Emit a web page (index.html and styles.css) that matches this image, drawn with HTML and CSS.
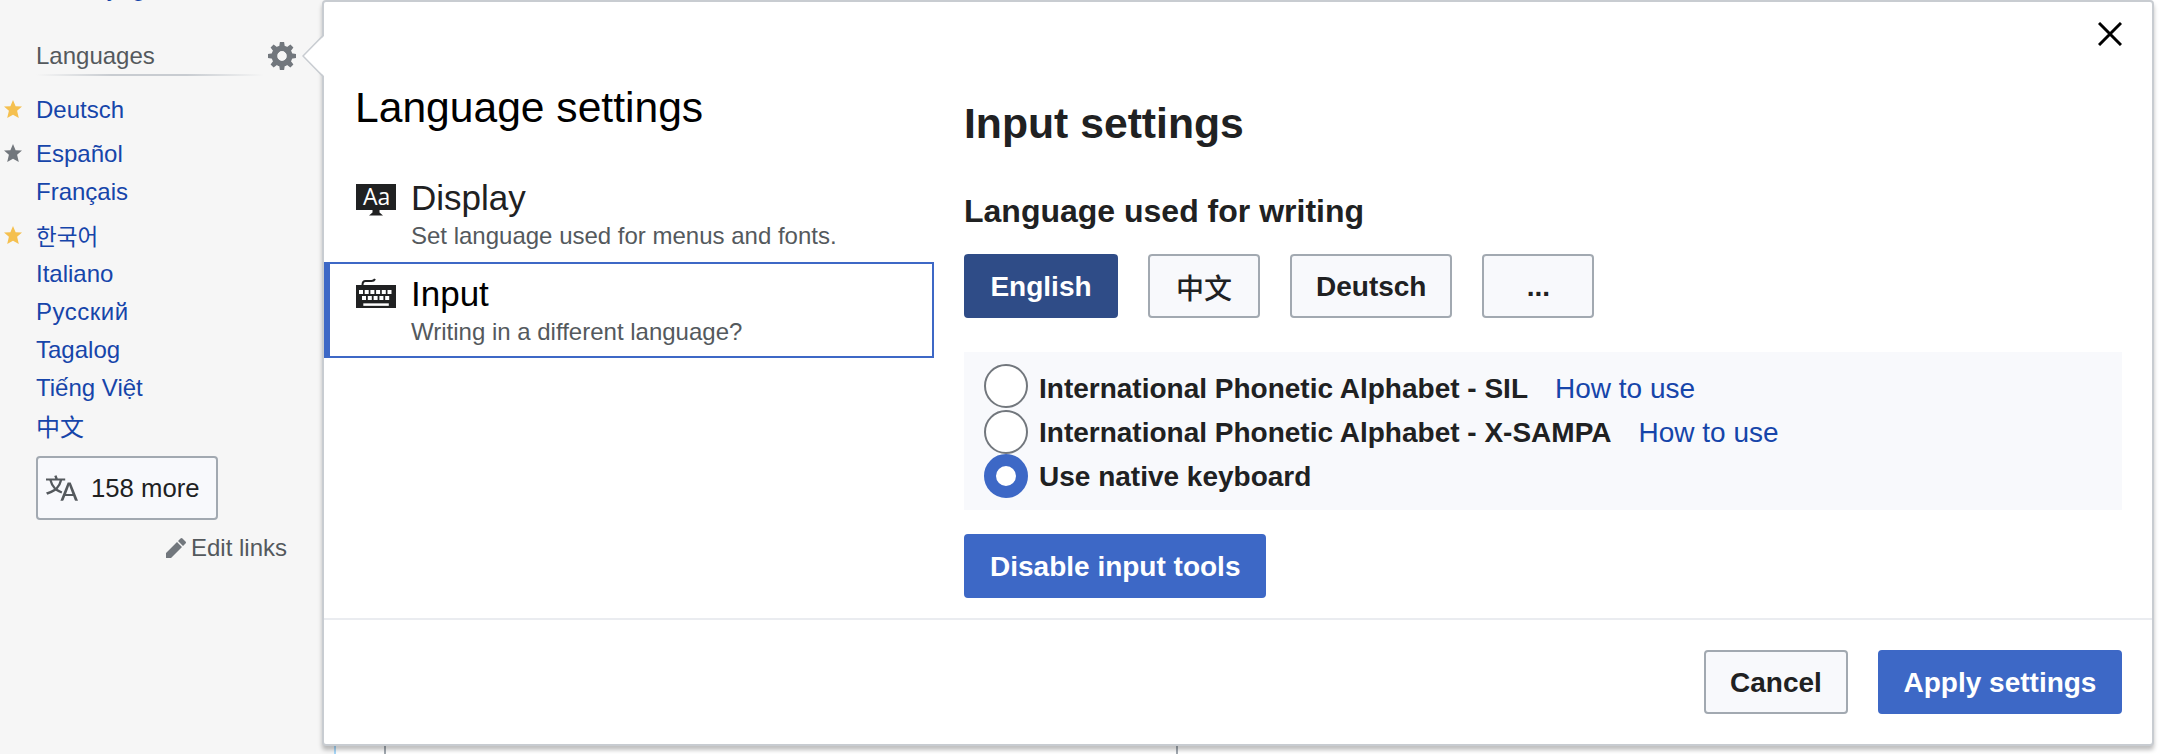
FILE: index.html
```html
<!DOCTYPE html>
<html lang="en">
<head>
<meta charset="utf-8">
<title>Language settings</title>
<link rel="stylesheet" href="styles.css">
</head>
<body>
<div class="page">
  <nav class="sidebar">
    <a class="link tool-link">Wikivoyage</a>
    <div class="heading">
      <h3 class="heading-text">Languages</h3>
      <svg class="gear" viewBox="0 0 20 20"><g transform="translate(10 10)"><path id="a" d="M1.5-10h-3l-1 6.500h5m0 7h-5l1 6.500h3"/><use href="#a" transform="rotate(45)"/><use href="#a" transform="rotate(90)"/><use href="#a" transform="rotate(135)"/></g><path d="M10 2.500a7.500 7.500 0 0 0 0 15 7.500 7.500 0 0 0 0-15v4a3.500 3.500 0 0 1 0 7 3.500 3.500 0 0 1 0-7"/></svg>
    </div>
    <ul class="languages">
      <li class="lang badge gold"><svg class="star" viewBox="0 0 18 18"><path d="M9 0l2.600 6.200 6.400.4-4.900 4.200L14.800 18 9 14.800 3.200 18l1.700-7.200L0 6.600l6.400-.4z"/></svg><a class="link">Deutsch</a></li>
      <li class="lang badge grey"><svg class="star" viewBox="0 0 18 18"><path d="M9 0l2.600 6.200 6.400.4-4.900 4.200L14.800 18 9 14.800 3.200 18l1.700-7.200L0 6.600l6.400-.4z"/></svg><a class="link">Español</a></li>
      <li class="lang"><a class="link">Français</a></li>
      <li class="lang badge gold korean"><svg class="star" viewBox="0 0 18 18"><path d="M9 0l2.600 6.200 6.400.4-4.900 4.200L14.800 18 9 14.800 3.200 18l1.700-7.200L0 6.600l6.400-.4z"/></svg><a class="link" lang="ko">한국어</a></li>
      <li class="lang"><a class="link">Italiano</a></li>
      <li class="lang"><a class="link russian">Русский</a></li>
      <li class="lang"><a class="link">Tagalog</a></li>
      <li class="lang"><a class="link">Tiếng Việt</a></li>
      <li class="lang chinese"><a class="link" lang="zh">中文</a></li>
    </ul>
    <button class="more"><svg class="translate" viewBox="0 0 20 20"><path d="M20 18h-1.440a.6.6 0 0 1-.4-.12.800.8 0 0 1-.23-.310L17 15h-5l-1 2.540a.8.800 0 0 1-.220.300.6.6 0 0 1-.4.140H9l4.550-11.470h1.890zm-3.530-4.310L14.890 9.500a12 12 0 0 1-.39-1.240q-.09.37-.19.690l-.19.560-1.580 4.190zm-6.300-1.580a13.400 13.400 0 0 1-2.910-1.410 11.460 11.460 0 0 0 2.810-5.370H12V4H7.310a4 4 0 0 0-.2-.56C6.870 2.790 6.600 2 6.600 2l-1.470.5s.4.890.6 1.500H0v1.330h2.150A11.230 11.230 0 0 0 5 10.700a17.200 17.200 0 0 1-5 2.100q.56.82.87 1.380a23.300 23.300 0 0 0 5.220-2.510 15.600 15.600 0 0 0 3.560 1.770zM3.630 5.330h4.910a8.100 8.100 0 0 1-2.450 4.450 9.100 9.100 0 0 1-2.460-4.450"/></svg>158 more</button>
    <a class="edit"><svg class="pencil" viewBox="0 0 20 20"><path d="M0 20v-5L11 4l5 5L5 20zM12 3l2.500-2.500q1-1 2 0l3 3q1 1 0 2L17 8z"/></svg>Edit links</a>
  </nav>
  <main class="article"><div class="article-frame"></div></main>

  <section class="dialog">
    <svg class="callout" viewBox="0 0 22 42"><path class="callout-fill" d="M22 1L1.500 21 22 41z"/><path class="callout-line" d="M20.500 1L1 21l19.500 20"/></svg>
    <svg class="close" viewBox="0 0 24 24"><path d="M1 1l22 22M23 1L1 23"/></svg>
    <div class="body">
      <div class="menu">
        <h2 class="menu-title">Language settings</h2>
        <div class="item">
          <svg class="item-icon" viewBox="0 0 40 40"><path class="dark" d="M0 8h40v26H23.500v2.500l3.500 3H13l3.500-3V34H0z"/><text class="aa" x="7" y="29">Aa</text></svg>
          <div class="item-text"><div class="item-name">Display</div><div class="item-sub">Set language used for menus and fonts.</div></div>
        </div>
        <div class="item selected">
          <svg class="item-icon" viewBox="0 0 40 40"><path class="dark" d="M0 13h40v23H0z"/><path class="cord" d="M6.500 13q0-4 3-4h6q2.500 0 3.500-2"/><path class="keys" d="M3 20h33" stroke-dasharray="4 1.700"/><path class="keys" d="M6 26h27.500" stroke-dasharray="4 1.800"/><path class="space" d="M7.300 32.600h25.500"/></svg>
          <div class="item-text"><div class="item-name active">Input</div><div class="item-sub">Writing in a different language?</div></div>
        </div>
      </div>
      <div class="settings">
        <h2 class="settings-title">Input settings</h2>
        <h3 class="settings-sub">Language used for writing</h3>
        <div class="choices">
          <button class="btn pressed">English</button>
          <button class="btn min han" lang="zh">中文</button>
          <button class="btn">Deutsch</button>
          <button class="btn min">...</button>
        </div>
        <div class="methods">
          <label class="method"><span class="radio"></span><span class="method-name">International Phonetic Alphabet - SIL</span><a class="link">How to use</a></label>
          <label class="method"><span class="radio second"></span><span class="method-name">International Phonetic Alphabet - X-SAMPA</span><a class="link">How to use</a></label>
          <label class="method"><span class="radio on"></span><span class="method-name">Use native keyboard</span></label>
        </div>
        <button class="btn primary">Disable input tools</button>
      </div>
    </div>
    <footer class="footer">
      <button class="btn cancel">Cancel</button>
      <button class="btn primary apply">Apply settings</button>
    </footer>
  </section>
</div>
</body>
</html>
```

FILE: styles.css
```css
* { box-sizing: border-box; }
body { margin: 0; background: #fff; font-family: "Liberation Sans", Arial, "Noto Sans CJK SC", sans-serif; color: #202122; }
h2, h3, ul { margin: 0; padding: 0; font-weight: 400; }
button { font-family: inherit; }
.page { position: relative; display: flex; width: 2170px; height: 754px; overflow: hidden; }
.link { color: #1645aa; }
:lang(ko) { font-family: "Noto Sans CJK KR", sans-serif; font-size: 22.5px; }

.sidebar { display: flex; flex-direction: column; width: 334px; height: 754px; padding-left: 36px; background: #f6f6f6; font-size: 24px; }
.tool-link { height: 28px; margin-top: -24px; line-height: 24px; white-space: nowrap; }
.heading { display: flex; margin-top: 36px; height: 40px; }
.heading-text { width: 228px; height: 36px; padding-top: 2px; font-size: 24px; line-height: 28px; color: #54595d; background: linear-gradient(to right, rgba(200,204,209,0) 0, #c8ccd1 33%, #c8ccd1 66%, rgba(200,204,209,0) 100%) 0 100% / 100% 2px no-repeat; }
.gear { width: 28px; height: 28px; margin: 2px 0 0 4px; fill: #72777d; }
.languages { list-style: none; margin-top: 5px; }
.lang { position: relative; height: 38px; padding-top: 5px; line-height: 28px; white-space: nowrap; }
.badge { height: 44px; padding-top: 11px; }
.korean { padding-top: 10px; }
.russian { letter-spacing: .5px; }
.chinese { height: 43px; padding-top: 7px; }
.star { position: absolute; left: -32px; top: 15px; width: 18px; height: 18px; }
.gold .star { fill: #f5c04f; }
.grey .star { fill: #72777d; }
.more { display: flex; align-items: center; width: 182px; height: 64px; margin: 6px 0 0 0; padding: 0 0 0 8px; border: 2px solid #a2a9b1; border-radius: 4px; background: #f8f9fc; font-size: 25.7px; color: #202122; }
.translate { width: 32px; height: 32px; margin-right: 13px; fill: #54595d; }
.edit { display: flex; align-items: center; margin: 14px 0 0 130px; color: #54595d; line-height: 28px; }
.pencil { width: 20px; height: 20px; margin-right: 5px; fill: #72777d; }

.article { flex: 1; display: flex; border-left: 2px solid #a7d7f9; }
.article-frame { width: 794px; margin-left: 48px; border: solid #a2a9b1; border-width: 0 2px; }

.dialog { position: absolute; left: 322px; top: 0; display: flex; flex-direction: column; width: 1832px; height: 746px; border: 2px solid #c8ccd1; border-radius: 4px; background: #fff; box-shadow: 0 4px 4px rgba(0,0,0,.25); }
.callout { position: absolute; left: -22px; top: 33px; width: 22px; height: 42px; }
.callout-fill { fill: #fff; }
.callout-line { fill: none; stroke: #c8ccd1; stroke-width: 1.500; }
.close { position: absolute; right: 30px; top: 20px; width: 24px; height: 24px; stroke: #000; stroke-width: 3; }
.body { display: flex; height: 616px; }
.menu { width: 610px; margin-right: 30px; }
.menu-title { margin: 80px 0 0 31px; font-size: 42.6px; line-height: 50px; color: #000; }
.item { display: flex; height: 96px; padding: 10px 0 0 32px; margin-top: 34px; }
.selected { margin-top: 0; border: 2px solid #3d68c6; border-left-width: 6px; padding: 8px 0 0 26px; }
.item-icon { width: 40px; height: 40px; margin-right: 15px; }
.dark { fill: #202122; }
.aa { font: 23px "Open Sans", sans-serif; fill: #fff; }
.cord { fill: none; stroke: #202122; stroke-width: 2; }
.keys { stroke: #fff; stroke-width: 4; }
.space { stroke: #fff; stroke-width: 2.500; }
.item-name { font-size: 35px; line-height: 44px; }
.active { color: #000; }
.item-sub { padding-top: 2px; font-size: 24px; line-height: 28px; color: #54595d; }
.settings { flex: 1; padding-right: 30px; }
.settings-title { margin-top: 96px; font-size: 42.7px; line-height: 50px; font-weight: 700; }
.settings-sub { margin-top: 43px; font-size: 32px; line-height: 40px; font-weight: 700; }
.choices { display: flex; gap: 30px; margin-top: 23px; }
.btn { height: 64px; padding: 1px 24px 0; border: 2px solid #a2a9b1; border-radius: 4px; background: #f8f9fc; color: #202122; font-size: 28px; font-weight: 700; white-space: nowrap; }
.min { width: 112px; }
.han { font-weight: 500; }
.pressed { width: 154px; background: #2f4c87; border-color: #2f4c87; color: #fff; }
.primary { background: #3d68c6; border-color: #3d68c6; color: #fff; }
.methods { height: 158px; margin: 34px 0 24px; padding: 12px 20px; background: #f8f9fc; }
.method { display: flex; height: 44px; font-size: 28px; line-height: 50px; white-space: nowrap; }
.radio { width: 44px; height: 44px; border: 2px solid #72777d; border-radius: 50%; background: #fff; }
.second { margin-top: 2px; }
.on { margin-top: 2px; border: 12px solid #3d68c6; }
.method-name { margin: 0 27px 0 11px; font-weight: 700; }
.footer { display: flex; flex: 1; justify-content: flex-end; gap: 30px; padding: 30px 30px 0; border-top: 2px solid #eaecf0; }
.cancel { width: 144px; }
.apply { width: 244px; padding: 1px 0 0; }
```
